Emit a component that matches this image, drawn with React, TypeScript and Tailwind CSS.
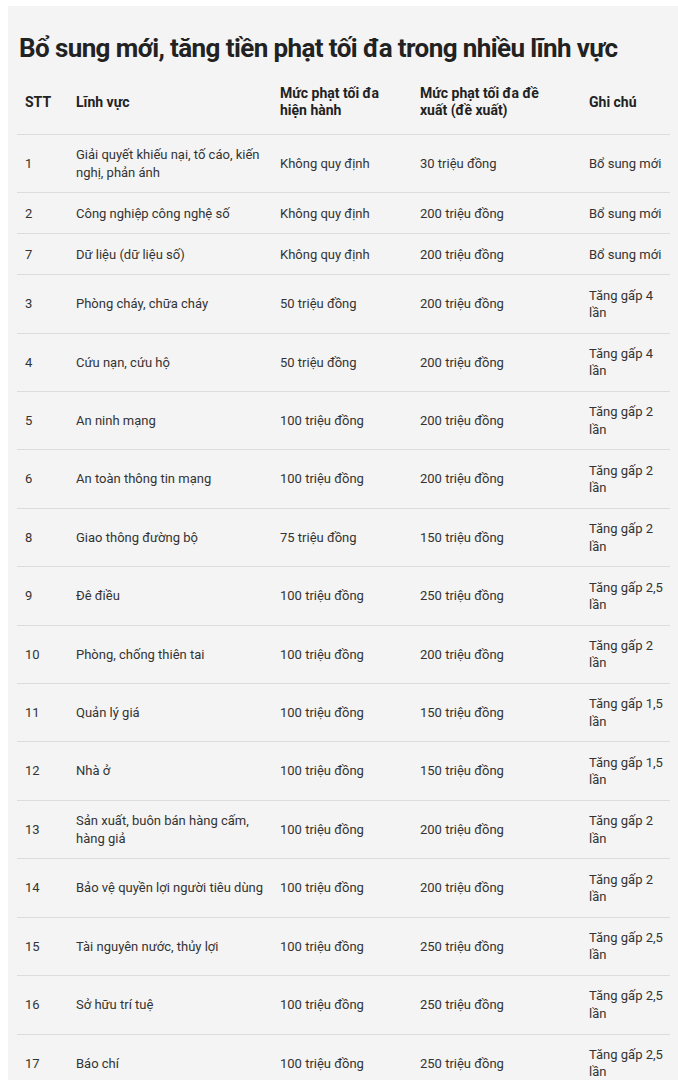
const rows = [
  { stt: "1", field: "Giải quyết khiếu nại, tố cáo, kiến nghị, phản ánh", current: "Không quy định", proposed: "30 triệu đồng", note: "Bổ sung mới" },
  { stt: "2", field: "Công nghiệp công nghệ số", current: "Không quy định", proposed: "200 triệu đồng", note: "Bổ sung mới" },
  { stt: "7", field: "Dữ liệu (dữ liệu số)", current: "Không quy định", proposed: "200 triệu đồng", note: "Bổ sung mới" },
  { stt: "3", field: "Phòng cháy, chữa cháy", current: "50 triệu đồng", proposed: "200 triệu đồng", note: "Tăng gấp 4 lần" },
  { stt: "4", field: "Cứu nạn, cứu hộ", current: "50 triệu đồng", proposed: "200 triệu đồng", note: "Tăng gấp 4 lần" },
  { stt: "5", field: "An ninh mạng", current: "100 triệu đồng", proposed: "200 triệu đồng", note: "Tăng gấp 2 lần" },
  { stt: "6", field: "An toàn thông tin mạng", current: "100 triệu đồng", proposed: "200 triệu đồng", note: "Tăng gấp 2 lần" },
  { stt: "8", field: "Giao thông đường bộ", current: "75 triệu đồng", proposed: "150 triệu đồng", note: "Tăng gấp 2 lần" },
  { stt: "9", field: "Đê điều", current: "100 triệu đồng", proposed: "250 triệu đồng", note: "Tăng gấp 2,5 lần" },
  { stt: "10", field: "Phòng, chống thiên tai", current: "100 triệu đồng", proposed: "200 triệu đồng", note: "Tăng gấp 2 lần" },
  { stt: "11", field: "Quản lý giá", current: "100 triệu đồng", proposed: "150 triệu đồng", note: "Tăng gấp 1,5 lần" },
  { stt: "12", field: "Nhà ở", current: "100 triệu đồng", proposed: "150 triệu đồng", note: "Tăng gấp 1,5 lần" },
  { stt: "13", field: "Sản xuất, buôn bán hàng cấm, hàng giả", current: "100 triệu đồng", proposed: "200 triệu đồng", note: "Tăng gấp 2 lần" },
  { stt: "14", field: "Bảo vệ quyền lợi người tiêu dùng", current: "100 triệu đồng", proposed: "200 triệu đồng", note: "Tăng gấp 2 lần" },
  { stt: "15", field: "Tài nguyên nước, thủy lợi", current: "100 triệu đồng", proposed: "250 triệu đồng", note: "Tăng gấp 2,5 lần" },
  { stt: "16", field: "Sở hữu trí tuệ", current: "100 triệu đồng", proposed: "250 triệu đồng", note: "Tăng gấp 2,5 lần" },
  { stt: "17", field: "Báo chí", current: "100 triệu đồng", proposed: "250 triệu đồng", note: "Tăng gấp 2,5 lần" },
];

export default function App() {
  return (
    <div className="min-h-screen bg-white pl-2 pt-1.5 font-['Roboto',sans-serif] text-[#333]">
      <div className="bg-[#f4f4f4] pb-6 pl-[9px] pr-2">
        {/* Tiêu đề */}
        <h1 className="pt-[26px] pl-[2px] text-[26px] font-bold leading-[32px] tracking-[-0.6px] text-[#222]">
          Bổ sung mới, tăng tiền phạt tối đa trong nhiều lĩnh vực
        </h1>

        <table className="mt-[21px] w-[653px] table-fixed border-collapse text-[13px] leading-[17.4px]">
          <colgroup>
            <col className="w-[51px]" />
            <col className="w-[204px]" />
            <col className="w-[140px]" />
            <col className="w-[169px]" />
            <col className="w-[89px]" />
          </colgroup>
          <thead>
            <tr className="border-b border-[#dcdcdc] text-left text-[14px] font-bold text-[#222]">
              <th className="px-2 pb-[14px] align-middle">STT</th>
              <th className="px-2 pb-[14px] align-middle">Lĩnh vực</th>
              <th className="px-2 pb-[14px] align-middle">
                <div className="w-[110px]">Mức phạt tối đa hiện hành</div>
              </th>
              <th className="px-2 pb-[14px] align-middle">
                <div className="w-[125px]">Mức phạt tối đa đề xuất (đề xuất)</div>
              </th>
              <th className="px-2 pb-[14px] align-middle">Ghi chú</th>
            </tr>
          </thead>
          <tbody>
            {rows.map((r) => (
              <tr key={r.stt} className="border-b border-[#dcdcdc]">
                <td className="px-2 py-[11.3px] align-middle">{r.stt}</td>
                <td className="pl-2 pr-1 py-[11.3px] align-middle">{r.field}</td>
                <td className="px-2 py-[11.3px] align-middle">{r.current}</td>
                <td className="px-2 py-[11.3px] align-middle">{r.proposed}</td>
                <td className="pl-2 pr-0 py-[11.3px] align-middle">
                  <div className="w-[76px]">{r.note}</div>
                </td>
              </tr>
            ))}
          </tbody>
        </table>
      </div>
    </div>
  );
}
